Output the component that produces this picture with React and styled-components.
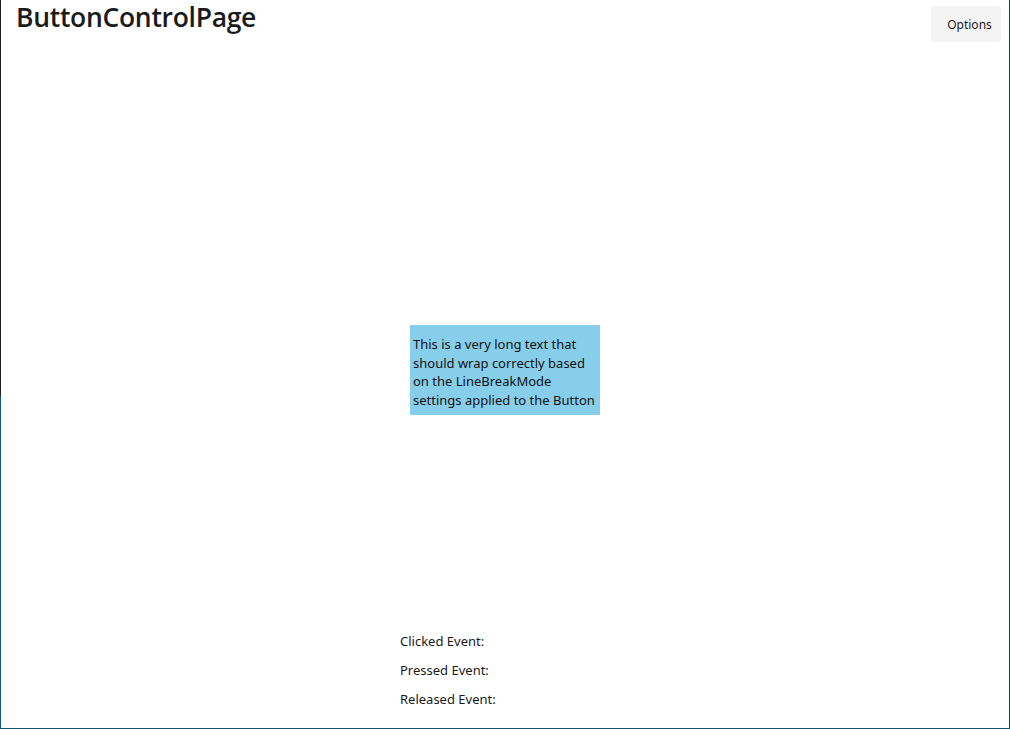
import React from "react";
import styled, { createGlobalStyle } from "styled-components";

const GlobalStyle = createGlobalStyle`
  html, body {
    margin: 0;
    padding: 0;
    height: 100%;
    background: #ffffff;
  }
  body {
    font-family: "Noto Sans", "Open Sans", sans-serif;
    color: #1a1a1a;
  }
  #root {
    height: 100%;
  }
`;

const Frame = styled.div`
  height: 100vh;
  box-sizing: border-box;
  padding-left: 1px;
  background: linear-gradient(to bottom, #1e1e1e 0 396px, #0f5c78 396px);
`;

const Window = styled.div`
  height: 100%;
  box-sizing: border-box;
  background: #ffffff;
  border-right: 1px solid #183b5e;
  border-bottom: 1px solid #0f5673;
  display: flex;
  flex-direction: column;
`;

const Header = styled.header`
  height: 48px;
  display: flex;
  align-items: flex-start;
  justify-content: space-between;
  padding: 0 8px 0 15px;
`;

const Title = styled.h1`
  margin: 0;
  padding-top: 0;
  font-family: "Open Sans", sans-serif;
  font-weight: 600;
  font-size: 26.5px;
  line-height: 34px;
  color: #1b1b1b;
  letter-spacing: -0.3px;
`;

const OptionsButton = styled.button`
  margin-top: 6px;
  width: 70px;
  height: 36px;
  border: none;
  border-radius: 4px;
  background: #f4f4f4;
  font-family: "Noto Sans", sans-serif;
  font-size: 12px;
  color: #1b1b1b;
  padding: 0 0 0 7px;
  cursor: pointer;
`;

const Main = styled.main`
  flex: 1;
  display: flex;
  justify-content: center;
  align-items: flex-start;
  padding-top: 277px;
`;

const WrapButton = styled.button`
  width: 190px;
  height: 90px;
  box-sizing: border-box;
  border: none;
  border-radius: 0;
  background: #87ceeb;
  padding: 10px 3px 0 3px;
  text-align: left;
  font-family: "Noto Sans", sans-serif;
  font-size: 13px;
  line-height: 18.5px;
  color: #111111;
  white-space: pre-line;
  display: flex;
  align-items: flex-start;
  cursor: pointer;
`;

const Events = styled.section`
  width: 210px;
  margin: 0 auto;
  padding-bottom: 14px;
  display: flex;
  flex-direction: column;
`;

const EventRow = styled.div`
  height: 29px;
  line-height: 29px;
  font-family: "Noto Sans", sans-serif;
  font-size: 13px;
  color: #1a1a1a;
`;

export default function App() {
  return (
    <>
      <GlobalStyle />
      <Frame>
        <Window>
          <Header>
            <Title>ButtonControlPage</Title>
            <OptionsButton>Options</OptionsButton>
          </Header>
          <Main>
            <WrapButton>
              {"This is a very long text that\nshould wrap correctly based\non the LineBreakMode\nsettings applied to the Button"}
            </WrapButton>
          </Main>
          <Events>
            <EventRow>Clicked Event:</EventRow>
            <EventRow>Pressed Event:</EventRow>
            <EventRow>Released Event:</EventRow>
          </Events>
        </Window>
      </Frame>
    </>
  );
}
